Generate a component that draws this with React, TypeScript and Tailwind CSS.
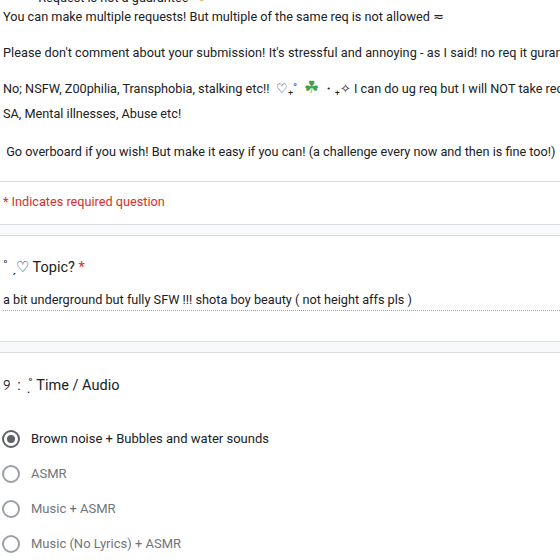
export default function App() {
  const desc = [
    "Please don't comment about your submission! It's stressful and annoying - as I said! no req it guranteed ♡",
    "",
    "No; NSFW, Z00philia, Transphobia, stalking etc!!",
    "SA, Mental illnesses, Abuse etc!",
    "",
    " Go overboard if you wish! But make it easy if you can! (a challenge every now and then is fine too!)",
  ];
  const options = [
    "Brown noise + Bubbles and water sounds",
    "ASMR",
    "Music + ASMR",
    "Music (No Lyrics) + ASMR",
  ];

  return (
    <div className="h-[560px] w-[560px] overflow-hidden bg-white font-['Roboto',sans-serif] text-[#202124]">
      {/* form description (top part scrolled away) */}
      <div className="mt-[-9px] pl-[3px] text-[12.7px]">
        <div className="h-[13px] whitespace-pre pl-[24px] leading-[13px]">
          ⋆ Request is not a guarantee ˙ <span className="text-[#d9b48a]">●</span> ⁾ ·˚
        </div>
        <div className="whitespace-pre leading-[25px]">
          You can make multiple requests! But multiple of the same req is not allowed ≂
        </div>
        <div className="h-[11px]" />
        {desc.map((line, i) =>
          line === "" ? (
            <div key={i} className={i === 4 ? "h-[13px]" : "h-[11px]"} />
          ) : i === 2 ? (
            <div key={i} className="h-[25px] whitespace-pre leading-[25px]">
              {line}  ♡₊˚  <span className="text-[17px] leading-[0] text-[#43a047]">☘</span> ・₊✧ I can do ug req but I
              will NOT take requests on
            </div>
          ) : (
            <div key={i} className={`whitespace-pre leading-[25px] ${i === 0 ? "tracking-[0.05px]" : ""}`}>
              {line}
            </div>
          ),
        )}
      </div>

      <div className="mt-[17px] border-t border-[#dadce0]" />
      <div className="pb-[12px] pl-[3px] pt-[10px] text-[12.7px] leading-[20px] text-[#d93025]">
        * Indicates required question
      </div>

      {/* gap between cards */}
      <div className="h-[12px] border-y border-[#dadce0] bg-[#f8f9fa]" />

      {/* Topic question */}
      <div className="pl-[3px]">
        <div className="mt-[20px] text-[14.5px] leading-[24px]">
          ˚ ˏ♡ Topic? <span className="text-[#d93025]">*</span>
        </div>
        <div className="mt-[10px] whitespace-nowrap border-b border-dotted border-[#9aa0a6] text-[12.7px] leading-[20px]">
          a bit underground but fully SFW !!! shota boy beauty ( not height affs pls )
        </div>
      </div>

      <div className="mt-[30px] h-[12px] border-y border-[#dadce0] bg-[#f8f9fa]" />

      {/* Time / Audio question */}
      <div className="pl-[2px]">
        <div className="mt-[21px] whitespace-pre pl-[1px] text-[14.5px] leading-[24px]">୨  :  ˚̣ Time / Audio</div>
        <div className="mt-[23px] flex flex-col">
          {options.map((opt, i) => (
            <div key={opt} className="flex h-[35px] items-center gap-[11px]">
              <span
                className={`flex h-[18px] w-[18px] items-center justify-center rounded-full border-2 ${
                  i === 0 ? "border-[#5f6368]" : "border-[#9aa0a6]"
                }`}
              >
                {i === 0 && <span className="h-[8px] w-[8px] rounded-full bg-[#5f6368]" />}
              </span>
              <span className={`text-[13px] ${i === 0 ? "text-[#202124]" : "text-[#70757a]"}`}>
                {opt}
              </span>
            </div>
          ))}
        </div>
      </div>
    </div>
  );
}
